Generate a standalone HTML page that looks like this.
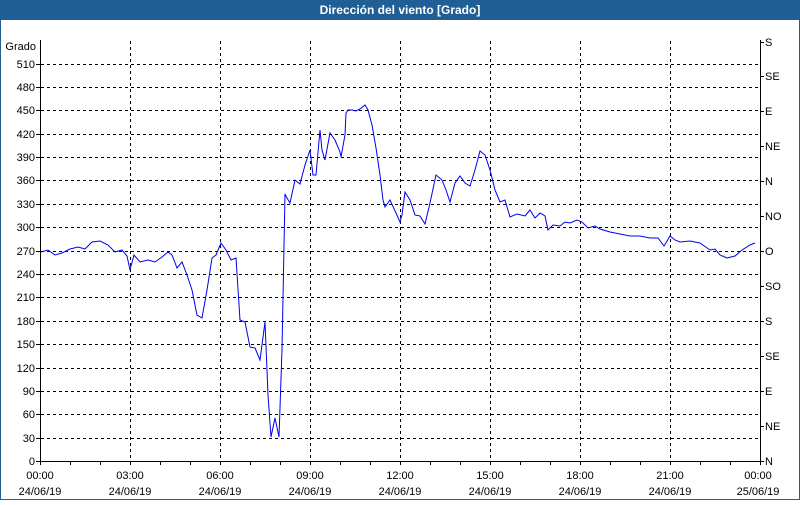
<!DOCTYPE html>
<html><head><meta charset="utf-8"><style>
html,body{margin:0;padding:0;background:#fff}
body{width:800px;height:500px;overflow:hidden;font-family:"Liberation Sans",sans-serif}
</style></head><body>
<svg width="800" height="500" xmlns="http://www.w3.org/2000/svg" font-family="Liberation Sans, sans-serif" font-size="11">
<rect x="0" y="0" width="800" height="500" fill="#fff"/>
<rect x="0.5" y="0.5" width="799" height="499" fill="none" stroke="#1f5f95"/>
<rect x="0" y="0" width="800" height="20" fill="#1f5f95"/>
<text x="400" y="14" text-anchor="middle" fill="#fff" font-weight="bold" font-size="12">Dirección del viento [Grado]</text>
<g stroke="#000" stroke-dasharray="3,3" stroke-width="1">
<path d="M130.5 41V461M220.5 41V461M310.5 41V461M400.5 41V461M490.5 41V461M580.5 41V461M670.5 41V461"/>
<path d="M41 438.5H760M41 414.5H760M41 391.5H760M41 368.5H760M41 344.5H760M41 321.5H760M41 297.5H760M41 274.5H760M41 251.5H760M41 227.5H760M41 204.5H760M41 180.5H760M41 157.5H760M41 134.5H760M41 110.5H760M41 87.5H760M41 64.5H760"/>
</g>
<path d="M40.5 40V461.5H760.5V40" fill="none" stroke="#000"/>
<g stroke="#000"><path d="M70.5 461v4M100.5 461v4M160.5 461v4M190.5 461v4M250.5 461v4M280.5 461v4M340.5 461v4M370.5 461v4M430.5 461v4M460.5 461v4M520.5 461v4M550.5 461v4M610.5 461v4M640.5 461v4M700.5 461v4M730.5 461v4M40.5 461v4M760.5 461v4M130.5 461v4M220.5 461v4M310.5 461v4M400.5 461v4M490.5 461v4M580.5 461v4M670.5 461v4"/>
<path d="M36 461.5h4M36 438.5h4M36 414.5h4M36 391.5h4M36 368.5h4M36 344.5h4M36 321.5h4M36 297.5h4M36 274.5h4M36 251.5h4M36 227.5h4M36 204.5h4M36 180.5h4M36 157.5h4M36 134.5h4M36 110.5h4M36 87.5h4M36 64.5h4"/>
<path d="M760 461.5h4M760 426.5h4M760 391.5h4M760 356.5h4M760 321.5h4M760 286.5h4M760 251.5h4M760 216.5h4M760 181.5h4M760 146.5h4M760 111.5h4M760 76.5h4M760 42.5h4"/></g>
<g text-anchor="end" fill="#000">
<text x="36" y="50">Grado</text>
<text x="35" y="465">0</text><text x="35" y="442">30</text><text x="35" y="418">60</text><text x="35" y="395">90</text><text x="35" y="372">120</text><text x="35" y="348">150</text><text x="35" y="325">180</text><text x="35" y="301">210</text><text x="35" y="278">240</text><text x="35" y="255">270</text><text x="35" y="231">300</text><text x="35" y="208">330</text><text x="35" y="184">360</text><text x="35" y="161">390</text><text x="35" y="138">420</text><text x="35" y="114">450</text><text x="35" y="91">480</text><text x="35" y="68">510</text>
</g>
<g fill="#000">
<text x="765" y="465">N</text><text x="765" y="430">NE</text><text x="765" y="395">E</text><text x="765" y="360">SE</text><text x="765" y="325">S</text><text x="765" y="290">SO</text><text x="765" y="255">O</text><text x="765" y="220">NO</text><text x="765" y="185">N</text><text x="765" y="150">NE</text><text x="765" y="115">E</text><text x="765" y="80">SE</text><text x="765" y="46">S</text>
</g>
<g text-anchor="middle" fill="#000">
<text x="40" y="479">00:00</text><text x="40" y="495">24/06/19</text>
<text x="130" y="479">03:00</text><text x="130" y="495">24/06/19</text>
<text x="220" y="479">06:00</text><text x="220" y="495">24/06/19</text>
<text x="310" y="479">09:00</text><text x="310" y="495">24/06/19</text>
<text x="400" y="479">12:00</text><text x="400" y="495">24/06/19</text>
<text x="490" y="479">15:00</text><text x="490" y="495">24/06/19</text>
<text x="580" y="479">18:00</text><text x="580" y="495">24/06/19</text>
<text x="670" y="479">21:00</text><text x="670" y="495">24/06/19</text>
<text x="758" y="479">00:00</text><text x="758" y="495">25/06/19</text>
</g>
<polyline fill="none" stroke="#0000ee" stroke-width="1" points="41,252 48,250 55,255 62,253 70,249 78,247 85,249 92,242 100,241 108,245 115,252 122,250 127,256 130,270 134,255 140,262 148,260 155,262 162,257 168,252 172,255 177,268 182,262 187,275 192,290 197,315 202,318 207,290 212,258 216,255 221,243 226,250 231,260 236,258 240,320 245,322 250,347 255,348 260,360 265,322 268,395 271,437 275,418 279,437 282,350 285,194 287,198 290,203 295,180 300,184 305,165 310,150 313,175 316,175 320,130 322,150 325,160 330,133 335,140 340,152 341,157 345,135 346,113 348,110 352,110 356,111 360,109 365,105 368,110 372,125 376,148 380,175 383,200 385,207 390,200 396,213 400,222 402,215 405,192 410,200 415,215 420,216 425,224 430,203 436,175 442,180 446,190 450,202 455,183 460,176 465,183 470,186 475,170 480,151 485,155 490,170 495,190 500,202 505,200 510,217 517,214 525,216 530,210 535,218 540,213 545,216 548,230 553,225 560,226 565,222 570,223 577,220 582,222 588,228 595,226 600,229 610,232 620,234 630,236 640,236 650,238 658,238 664,246 670,236 675,240 680,242 690,241 700,243 710,250 715,249 720,255 727,258 735,256 742,250 750,245 755,243"/>
</svg>
</body></html>
